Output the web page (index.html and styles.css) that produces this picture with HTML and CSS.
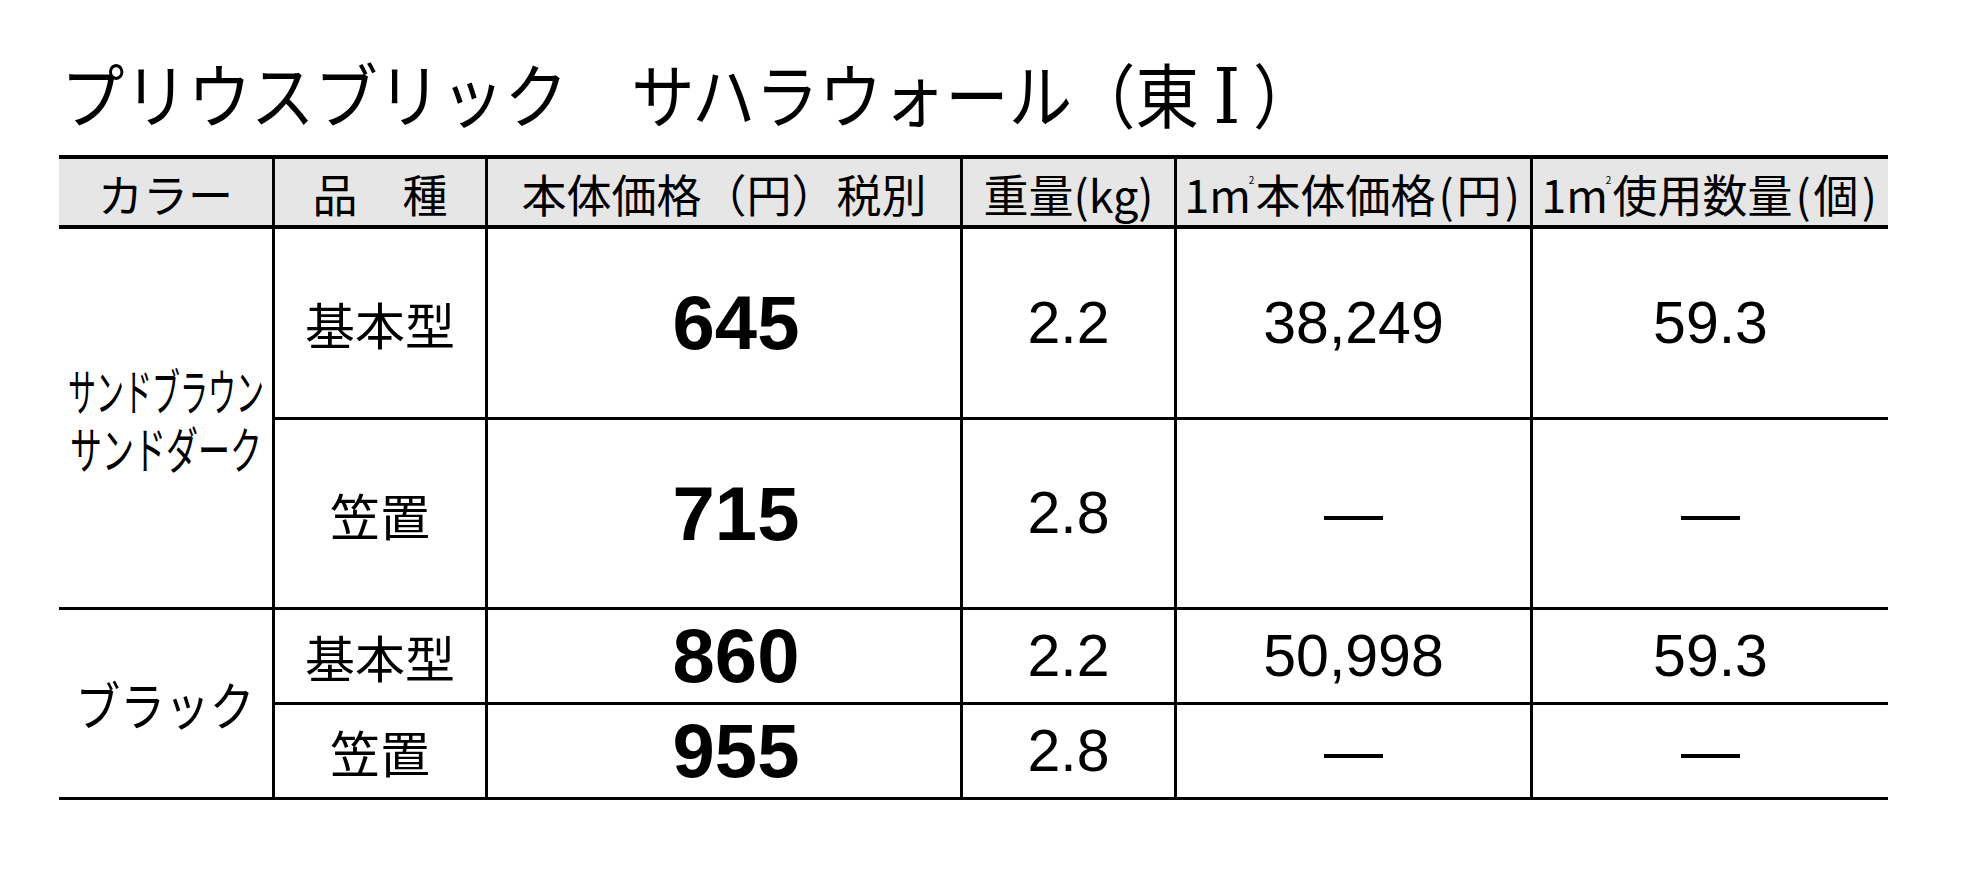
FILE: index.html
```html
<!DOCTYPE html>
<html lang="ja">
<head>
    <meta charset="UTF-8">
    <meta name="viewport" content="width=device-width, initial-scale=1.0">
    <title>プリウスブリック サハラウォール</title>
    <link rel="stylesheet" href="styles.css">
</head>
<body>
    <main class="page">
        <h1 class="title"><span>プリウスブリック　サハラウォール（東<span class="roman">Ⅰ</span>）</span></h1>
        <div class="sheet">
            <div class="cell head">カラー</div>
            <div class="cell head">品　種</div>
            <div class="cell head">本体価格（円）税別</div>
            <div class="cell head">重量(kg)</div>
            <div class="cell head">1m<sup>2</sup>本体価格<span class="paren">(</span>円<span class="paren">)</span></div>
            <div class="cell head last">1m<sup>2</sup>使用数量<span class="paren">(</span>個<span class="paren">)</span></div>

            <div class="cell color tall">
                <span class="cond brown">サンドブラウン</span>
                <span class="cond dark">サンドダーク</span>
            </div>
            <div class="cell kind">基本型</div>
            <div class="cell price">645</div>
            <div class="cell num">2.2</div>
            <div class="cell num">38,249</div>
            <div class="cell num last">59.3</div>
            <div class="cell kind">笠置</div>
            <div class="cell price">715</div>
            <div class="cell num">2.8</div>
            <div class="cell num">—</div>
            <div class="cell num last">—</div>

            <div class="cell color tall">
                <span class="cond black">ブラック</span>
            </div>
            <div class="cell kind">基本型</div>
            <div class="cell price">860</div>
            <div class="cell num">2.2</div>
            <div class="cell num">50,998</div>
            <div class="cell num last">59.3</div>
            <div class="cell kind">笠置</div>
            <div class="cell price">955</div>
            <div class="cell num">2.8</div>
            <div class="cell num">—</div>
            <div class="cell num last">—</div>
        </div>
    </main>
</body>
</html>
```

FILE: styles.css
```css
*{
    margin: 0;
    padding: 0;
    box-sizing: border-box;
}

body{
    background-color: #fff;
    color: #000;
    font-family: "Noto Sans CJK JP", sans-serif;
}

.page{
    padding-left: 59px;
}

.title{
    height: 155px;
    padding-top: 58px;
    padding-left: 2px;
    font-size: 70px;
    font-weight: 400;
    line-height: 70px;
    white-space: nowrap;
}

.title > span{
    display: inline-block;
    transform: scaleX(.905);
    transform-origin: left center;
}

.roman{
    font-family: "DejaVu Serif", "Liberation Serif", serif;
    font-size: 76px;
    margin: 0 14px 0 16px;
}

.sheet{
    width: 1829px;
    display: grid;
    grid-template-columns: 216px 213px 475px 214px 356px 355px;
    grid-template-rows: 74px 191px 190px 95px 95px;
}

.cell{
    display: flex;
    align-items: center;
    justify-content: center;
    border-right: 3px solid #000;
    border-bottom: 3px solid #000;
    line-height: 1;
    white-space: nowrap;
}

.cell.last{
    border-right: none;
}

.head{
    background-color: #e6e6e6;
    border-top: 4px solid #000;
    border-bottom-width: 4px;
    font-size: 45px;
    padding-top: 2px;
}

.head sup{
    font-size: 10px;
    line-height: 1;
    align-self: flex-start;
    margin-top: 14px;
    margin-left: -2px;
    margin-right: 1px;
}

.paren{
    margin: 0 3px;
}

.tall{
    grid-row: span 2;
    flex-direction: column;
}

.cond{
    display: inline-block;
    font-size: 50px;
    line-height: 58px;
}

.brown{
    transform: scaleX(.56);
}

.dark{
    transform: scaleX(.64);
}

.black{
    font-size: 52px;
    transform: scaleX(.86);
}

.kind{
    font-size: 50px;
}

.price{
    font-family: "Liberation Sans", Arial, sans-serif;
    font-weight: 700;
    font-size: 76px;
    padding-left: 24px;
}

.num{
    font-family: "Liberation Sans", Arial, sans-serif;
    font-size: 59px;
}
```
